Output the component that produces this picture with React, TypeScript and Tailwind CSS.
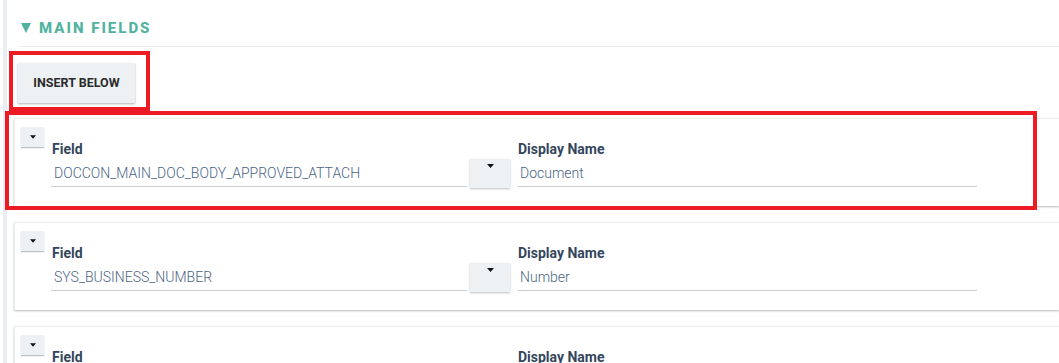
import React from 'react';

type Row = { field: string; display: string };

const rows: Row[] = [
  { field: 'DOCCON_MAIN_DOC_BODY_APPROVED_ATTACH', display: 'Document' },
  { field: 'SYS_BUSINESS_NUMBER', display: 'Number' },
  { field: '', display: '' },
];

const Caret: React.FC<{ w?: number; h?: number }> = ({ w = 7, h = 4 }) => (
  <svg width={w} height={h} viewBox="0 0 7 4" className="block">
    <path d="M0 0 L7 0 L3.5 4 Z" fill="#111" />
  </svg>
);

const FieldCard: React.FC<{ row: Row }> = ({ row }) => (
  <div className="ml-[7px] mt-[16px] h-[88px] flex bg-white border-t border-l border-[#eceef1] shadow-[0_1px_2px_rgba(0,0,0,0.28)] first:mt-[15px]">
    <button className="ml-[6px] mt-[8px] w-[23px] h-[20px] bg-[#eef1f4] shadow-[0_1px_1px_rgba(0,0,0,0.25)] flex items-center justify-center shrink-0">
      <Caret w={6} h={4} />
    </button>

    <div className="ml-[7px] pt-[22px] w-[416px] shrink-0">
      <div className="h-[16px] leading-[16px] pl-[1px] text-[14px] font-bold text-[#34465c]">Field</div>
      <div className="h-[30px] border-b border-[#c8cdd8] flex items-end pb-[4px] pl-[3px]">
        <span className="leading-[18px] text-[14px] font-light text-[#4a6484]">{row.field}</span>
      </div>
    </div>

    <div className="ml-[3px] mt-[40px] w-[40px] h-[29px] bg-[#eef1f4] shadow-[0_1px_2px_rgba(0,0,0,0.25)] flex justify-center pt-[5px] shrink-0">
      <Caret />
    </div>

    <div className="ml-[8px] pt-[22px] w-[459px] shrink-0">
      <div className="h-[16px] leading-[16px] text-[14px] font-bold text-[#34465c]">Display Name</div>
      <div className="h-[30px] border-b border-[#c8cdd8] flex items-end pb-[4px] pl-[2px]">
        <span className="leading-[18px] text-[14px] font-light text-[#4a6484]">{row.display}</span>
      </div>
    </div>
  </div>
);

export default function App() {
  return (
    <div
      className="relative w-[1059px] h-[363px] overflow-hidden bg-white flex"
      style={{ fontFamily: 'Roboto, "Liberation Sans", sans-serif' }}
    >
      <div className="w-[3px] shrink-0" />
      <div className="w-[4px] shrink-0 bg-[#e9ecf0]" />

      <div className="flex-1 min-w-0">
        {/* Section header */}
        <div className="ml-[12px] h-[47px] border-b border-[#e8eaed] flex items-center pt-[10px] pl-[2px] gap-[8px]">
          <svg width="10" height="10" viewBox="0 0 10 10" className="block">
            <path d="M0 0 L10 0 L5 10 Z" fill="#4fb3a0" />
          </svg>
          <span className="text-[15px] font-extrabold tracking-[2px] text-[#4fb3a0] leading-none">MAIN FIELDS</span>
        </div>

        <div className="ml-[11px] mt-[16px]">
          <button className="w-[117px] h-[40px] bg-[#eef1f4] shadow-[0_1px_2px_rgba(0,0,0,0.3)] text-[12.5px] font-bold text-[#2b2b2b]">
            INSERT BELOW
          </button>
        </div>

        <div className="flex flex-col">
          {rows.map((r, i) => (
            <FieldCard key={i} row={r} />
          ))}
        </div>
      </div>

      {/* annotation boxes */}
      <div className="absolute left-[9px] top-[51px] w-[141px] h-[60px] border-4 border-[#ed1c24] pointer-events-none" />
      <div className="absolute left-[5px] top-[111px] w-[1032px] h-[99px] border-4 border-[#ed1c24] pointer-events-none" />
    </div>
  );
}
